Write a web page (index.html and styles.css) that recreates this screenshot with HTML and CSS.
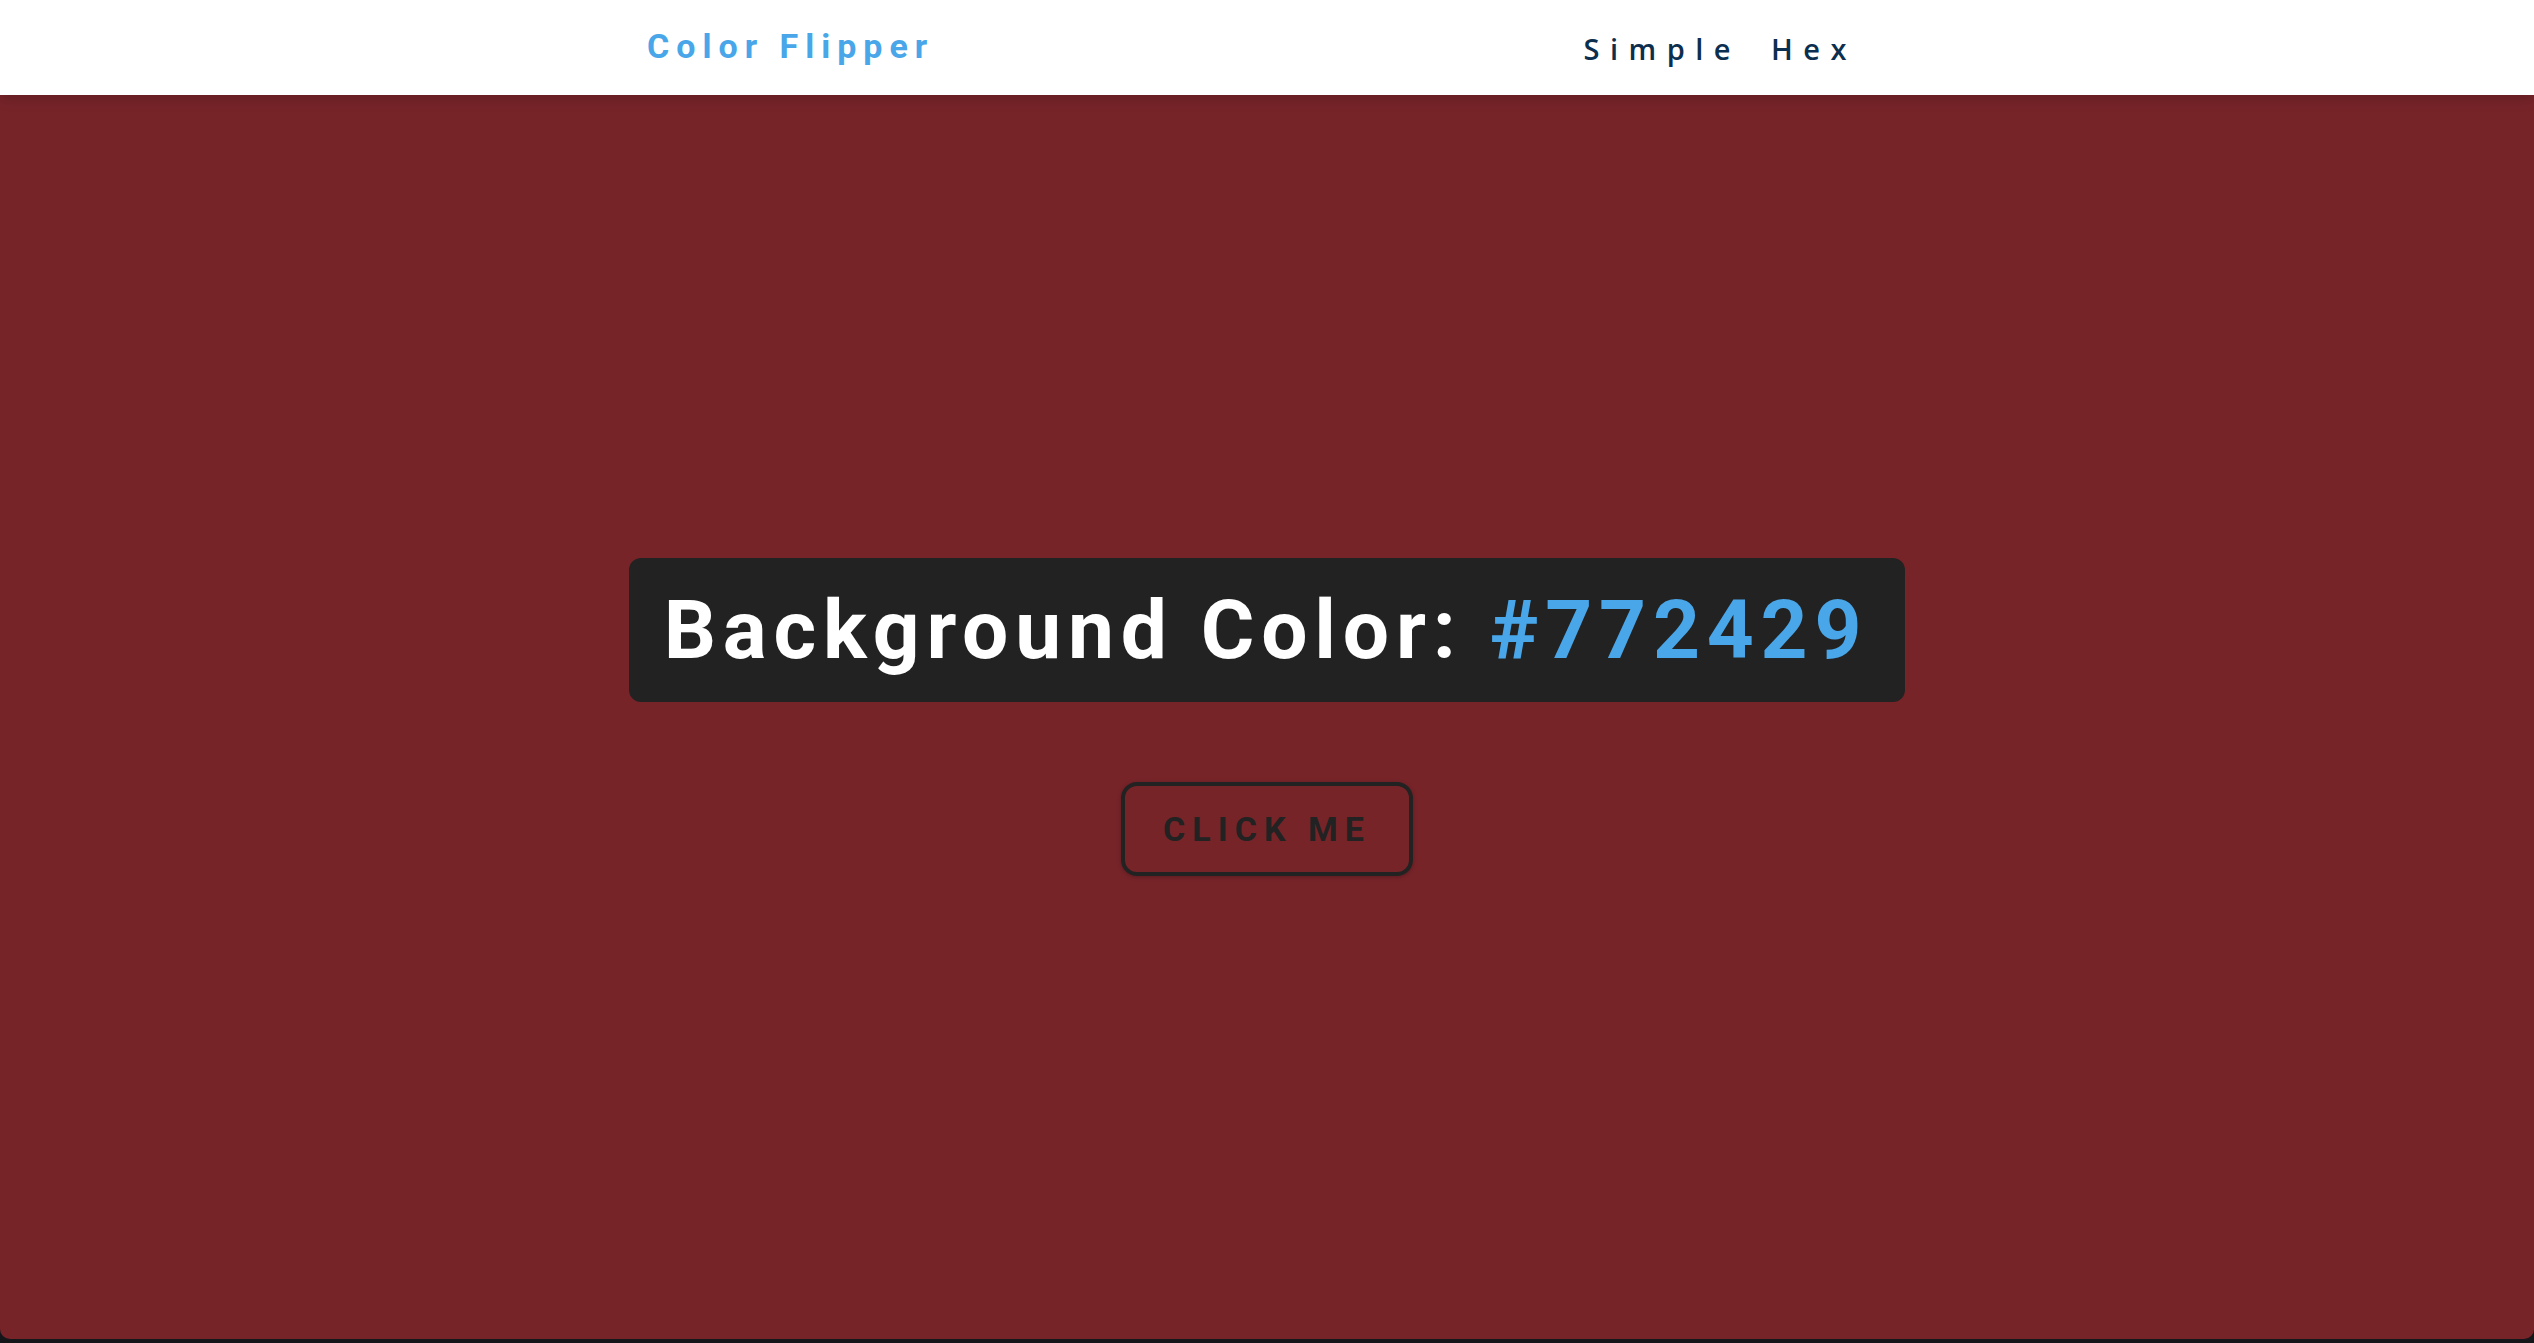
FILE: index.html
```html
<!DOCTYPE html>
<html lang="en">
<head>
<meta charset="utf-8">
<title>Color Flipper</title>
<link rel="stylesheet" href="styles.css">
</head>
<body>
<div class="page">
  <nav class="navbar">
    <div class="nav-center">
      <h4 class="brand">Color Flipper</h4>
      <ul class="nav-links">
        <li><a href="#">Simple</a></li>
        <li><a href="#">Hex</a></li>
      </ul>
    </div>
  </nav>
  <main class="main">
    <div class="container">
      <h2 class="title">Background Color: <span class="color">#772429</span></h2>
      <button class="btn" type="button">Click Me</button>
    </div>
  </main>
</div>
</body>
</html>
```

FILE: styles.css
```css
* { box-sizing: border-box; }
html, body { margin: 0; padding: 0; }
body {
  background: #14161a;
  font-family: Roboto, "Liberation Sans", sans-serif;
  height: 100vh;
  overflow: hidden;
}
.page {
  height: calc(100vh - 4px);
  display: flex;
  flex-direction: column;
  background: #772429;
  border-radius: 0 0 10px 10px;
  overflow: hidden;
}
.navbar {
  height: 95px;
  flex: 0 0 95px;
  background: #fff;
  box-shadow: 0 4px 12px rgba(0, 0, 0, 0.18);
  position: relative;
  z-index: 1;
}
.nav-center {
  width: 1240px;
  height: 100%;
  margin: 0 auto;
  display: flex;
  align-items: center;
  justify-content: space-between;
}
.brand {
  margin: 0;
  font-family: Roboto, "Liberation Sans", sans-serif;
  font-weight: 700;
  font-size: 34px;
  letter-spacing: 7px;
  color: #49a6e9;
  line-height: 1;
  padding-bottom: 4px;
}
.nav-links {
  list-style: none;
  margin: 0;
  padding: 2px 30px 0 0;
  display: flex;
  gap: 30px;
}
.nav-links a {
  font-family: "Open Sans", "Liberation Sans", sans-serif;
  font-weight: 600;
  font-size: 29px;
  letter-spacing: 10.5px;
  color: #0c2f4f;
  text-decoration: none;
  line-height: 1;
}
.main {
  flex: 1;
  display: flex;
  align-items: center;
  justify-content: center;
}
.container {
  display: flex;
  flex-direction: column;
  align-items: center;
}
.title {
  margin: 0;
  background: #222;
  color: #fff;
  border-radius: 12px;
  padding: 0 37px 0 35px;
  height: 144px;
  display: flex;
  align-items: center;
  font-family: Roboto, "Liberation Sans", sans-serif;
  font-weight: 700;
  font-size: 82px;
  letter-spacing: 6.8px;
  white-space: pre;
}
.color { color: #49a6e9; }
.btn {
  margin-top: 80px;
  width: 292px;
  height: 94px;
  background: transparent;
  border: 4px solid #222;
  border-radius: 16px;
  box-shadow: 0 1px 4px rgba(0, 0, 0, 0.25);
  color: #222;
  font-family: Roboto, "Liberation Sans", sans-serif;
  font-weight: 700;
  font-size: 34px;
  letter-spacing: 7px;
  text-transform: uppercase;
  padding: 0;
  cursor: pointer;
}
```
